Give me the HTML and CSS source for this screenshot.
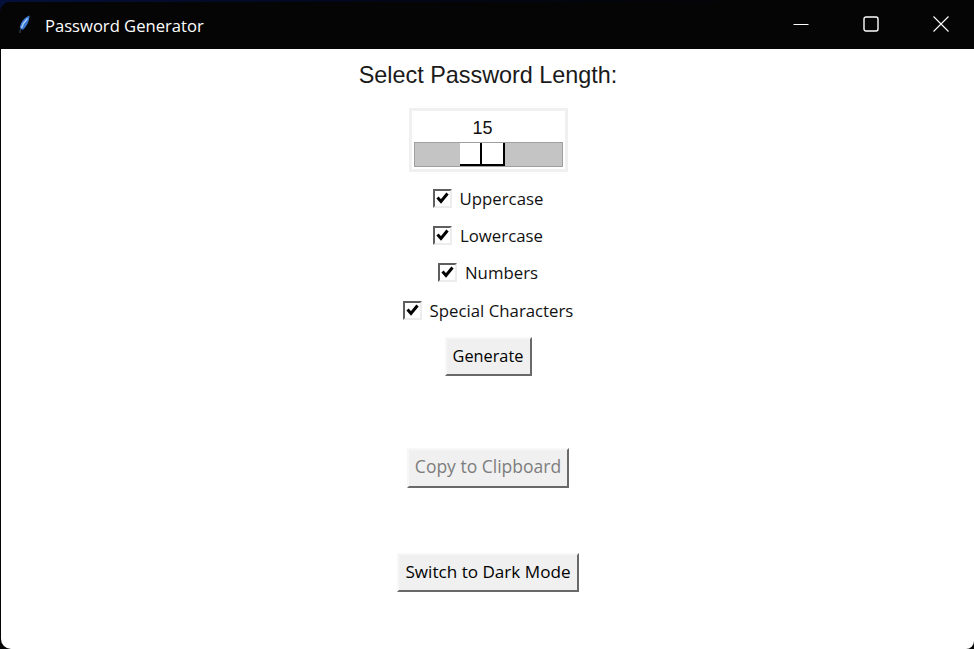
FILE: index.html
```html
<!DOCTYPE html>
<html lang="en">
<head>
<meta charset="utf-8">
<title>Password Generator</title>
<link rel="stylesheet" href="styles.css">
</head>
<body>
<div class="window">
  <header class="titlebar">
    <svg class="app-icon" width="12" height="20" viewBox="0 0 12 20"><path d="M10.500 0.500C6 2 1.500 6.500 0.800 13L3.500 15C7.500 12 10.500 6 10.500 0.500Z" fill="#3a78d2"/><path d="M8.500 3.500C6 6 3.500 9.500 2.500 13" stroke="#b5d4f7" stroke-width="1.300" fill="none"/><path d="M1.500 14L0.800 18" stroke="#333b47" stroke-width="1.400" fill="none"/></svg>
    <span class="title">Password Generator</span>
    <div class="controls">
      <span class="ctl"><svg width="16" height="16" viewBox="0 0 16 16"><path d="M0.500 8.500H15.500" stroke="#fff" stroke-width="1"/></svg></span>
      <span class="ctl ctl-max"><svg width="16" height="16" viewBox="0 0 16 16"><rect x="1" y="1" width="14" height="14" rx="2" fill="none" stroke="#fff" stroke-width="1.400"/></svg></span>
      <span class="ctl"><svg width="16" height="16" viewBox="0 0 16 16"><path d="M0.500 0.500L15.500 15.500M15.500 0.500L0.500 15.500" stroke="#fff" stroke-width="1.100"/></svg></span>
    </div>
  </header>
  <main class="content">
    <h1 class="heading">Select Password Length:</h1>
    <div class="scale">
      <div class="scale-value">15</div>
      <div class="trough"><div class="thumb"><span class="thumb-half"></span><span class="thumb-half"></span></div></div>
    </div>
    <div class="checks">
      <label class="check"><span class="box"><svg width="13" height="13" viewBox="0 0 13 13"><path d="M1.500 5.500L5 9.500L11.500 1.500" fill="none" stroke="#000" stroke-width="3"/></svg></span>Uppercase</label>
      <label class="check"><span class="box"><svg width="13" height="13" viewBox="0 0 13 13"><path d="M1.500 5.500L5 9.500L11.500 1.500" fill="none" stroke="#000" stroke-width="3"/></svg></span>Lowercase</label>
      <label class="check"><span class="box"><svg width="13" height="13" viewBox="0 0 13 13"><path d="M1.500 5.500L5 9.500L11.500 1.500" fill="none" stroke="#000" stroke-width="3"/></svg></span>Numbers</label>
      <label class="check"><span class="box"><svg width="13" height="13" viewBox="0 0 13 13"><path d="M1.500 5.500L5 9.500L11.500 1.500" fill="none" stroke="#000" stroke-width="3"/></svg></span>Special Characters</label>
    </div>
    <button class="btn btn-generate">Generate</button>
    <button class="btn btn-copy" disabled>Copy to Clipboard</button>
    <button class="btn btn-dark">Switch to Dark Mode</button>
  </main>
</div>
</body>
</html>
```
FILE: styles.css
```css
* { box-sizing: border-box; }
html, body { margin: 0; height: 100%; }
body { background: linear-gradient(90deg, #04103a, #020617 40%, #050505 80%); overflow: hidden; padding-top: 2px; }
.window { width: 974px; height: 647px; display: flex; flex-direction: column; background: #050505; border-radius: 10px 10px 0 0; }
.titlebar { height: 47px; flex: none; display: flex; align-items: center; padding-left: 19px; color: #fff; font: 16px "Open Sans", sans-serif; }
.app-icon { flex: none; margin-top: -1px; }
.title { margin-left: 14px; margin-top: -1px; font-size: 16.600px; }
.controls { margin-left: auto; display: flex; margin-right: -2px; margin-top: -3px; }
.ctl { width: 70px; height: 47px; display: flex; align-items: center; justify-content: center; }
.ctl-max { padding-right: 1px; }
.content { flex: 1; margin-left: 1px; background: #fff; border-radius: 0 0 8px 10px; display: flex; flex-direction: column; align-items: center; padding-left: 1px; font-family: "Open Sans", sans-serif; color: #000; }
.heading { margin: 12px 0 0; font: 400 23.400px/28px "Liberation Sans", sans-serif; color: #1a1a1a; }
.scale { margin-top: 19px; width: 159px; height: 64px; border: 3px solid #f0f0f0; padding: 0 2px; display: flex; flex-direction: column; }
.scale-value { height: 31px; font: 18px/30px "Liberation Sans", sans-serif; text-align: center; padding-right: 11px; padding-top: 2px; color: #111; }
.trough { height: 25px; background: #c4c4c4; border: 1px solid #a0a0a0; display: flex; justify-content: center; padding-right: 12px; }
.thumb { width: 45px; height: 23px; display: flex; border-right: 2px solid #000; border-bottom: 2px solid #000; background: #fff; }
.thumb-half { flex: 1; }
.thumb-half + .thumb-half { border-left: 2px solid #000; }
.checks { margin-top: 17px; display: flex; flex-direction: column; align-items: center; gap: 19px; }
.check { display: flex; align-items: center; height: 18.400px; font-size: 16.800px; line-height: 19px; color: #111; }
.box { width: 19px; height: 19px; margin-right: 8px; border-top: 2px solid #5f5f5f; border-left: 2px solid #5f5f5f; border-right: 2px solid #ededed; border-bottom: 2px solid #ededed; background: #fff; display: flex; align-items: center; justify-content: center; }
.btn { display: block; height: 39px; padding: 0 0 3px; font-family: "Open Sans", sans-serif; font-size: 16.300px; color: #000; background: #f0f0f0; border: 2px solid; border-color: #f7f7f7 #696969 #696969 #f7f7f7; border-radius: 0; }
.btn-generate { margin-top: 17px; width: 87px; padding-bottom: 1px; }
.btn-copy { margin-top: 72px; width: 162px; height: 40px; color: #7d7d7d; font-size: 17.500px; }
.btn-dark { margin-top: 65px; width: 182px; font-size: 17.100px; padding-bottom: 1px; }
```
